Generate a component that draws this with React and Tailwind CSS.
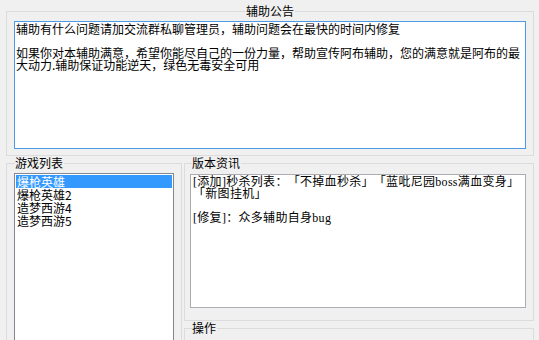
export default function App() {
  const items = ["爆枪英雄", "爆枪英雄2", "造梦西游4", "造梦西游5"];
  return (
    <div className="w-[539px] h-[340px] overflow-hidden bg-[#f0f0f0] pt-[4px] pl-[6px] pr-[5px] text-black text-[12px] font-['Noto_Sans_CJK_SC',sans-serif] [text-spacing-trim:space-all]">
      <fieldset className="border border-[#dcdcdc] px-[7px] pt-[3px] pb-[6px]">
        <legend className="mx-auto px-[1px] leading-[14px]">辅助公告</legend>
        <div className="h-[128px] w-full border border-[#4d9be6] bg-white px-[1px] pt-[1px] leading-[12px] whitespace-pre">
          <div>辅助有什么问题请加交流群私聊管理员，辅助问题会在最快的时间内修复</div>
          <div>&nbsp;</div>
          <div>如果你对本辅助满意，希望你能尽自己的一份力量，帮助宣传阿布辅助，您的满意就是阿布的最</div>
          <div>大动力.辅助保证功能逆天，绿色无毒安全可用</div>
        </div>
      </fieldset>
      <div className="flex gap-[2px]">
        <fieldset className="w-[176px] h-[200px] shrink-0 border border-[#dcdcdc] pl-[7px] pr-[7px] pt-[3px]">
          <legend className="ml-[1px] pr-[1px] leading-[14px]">游戏列表</legend>
          <div className="h-[200px] w-full border border-[#828790] bg-white p-[1px] leading-[13px]">
            {items.map((t, i) => (
              <div key={t} className={i === 0 ? "bg-[#3399ff] text-white pl-[1px] h-[13px]" : "pl-[1px] h-[13px]"}>
                {t}
              </div>
            ))}
          </div>
        </fieldset>
        <div className="flex-1 flex flex-col">
          <fieldset className="h-[165px] border border-[#dcdcdc] pl-[5px] pr-[7px] pt-[4px] pb-[12px]">
            <legend className="ml-[2px] pr-[1px] leading-[14px]">版本资讯</legend>
            <div className="h-[134px] w-full border border-[#abadb3] bg-white px-[2px] pt-[1px] leading-[12px] tracking-[0.3px] whitespace-pre font-['Liberation_Serif','Noto_Sans_CJK_SC',serif]">
              <div>[添加]秒杀列表：「不掉血秒杀」「蓝吡尼园boss满血变身」</div>
              <div>「新图挂机」</div>
              <div>&nbsp;</div>
              <div>[修复]：众多辅助自身bug</div>
            </div>
          </fieldset>
          <fieldset className="h-[40px] border border-[#dcdcdc] pl-[5px] pr-[7px]">
            <legend className="ml-[2px] pr-[1px] leading-[14px]">操作</legend>
          </fieldset>
        </div>
      </div>
    </div>
  );
}
